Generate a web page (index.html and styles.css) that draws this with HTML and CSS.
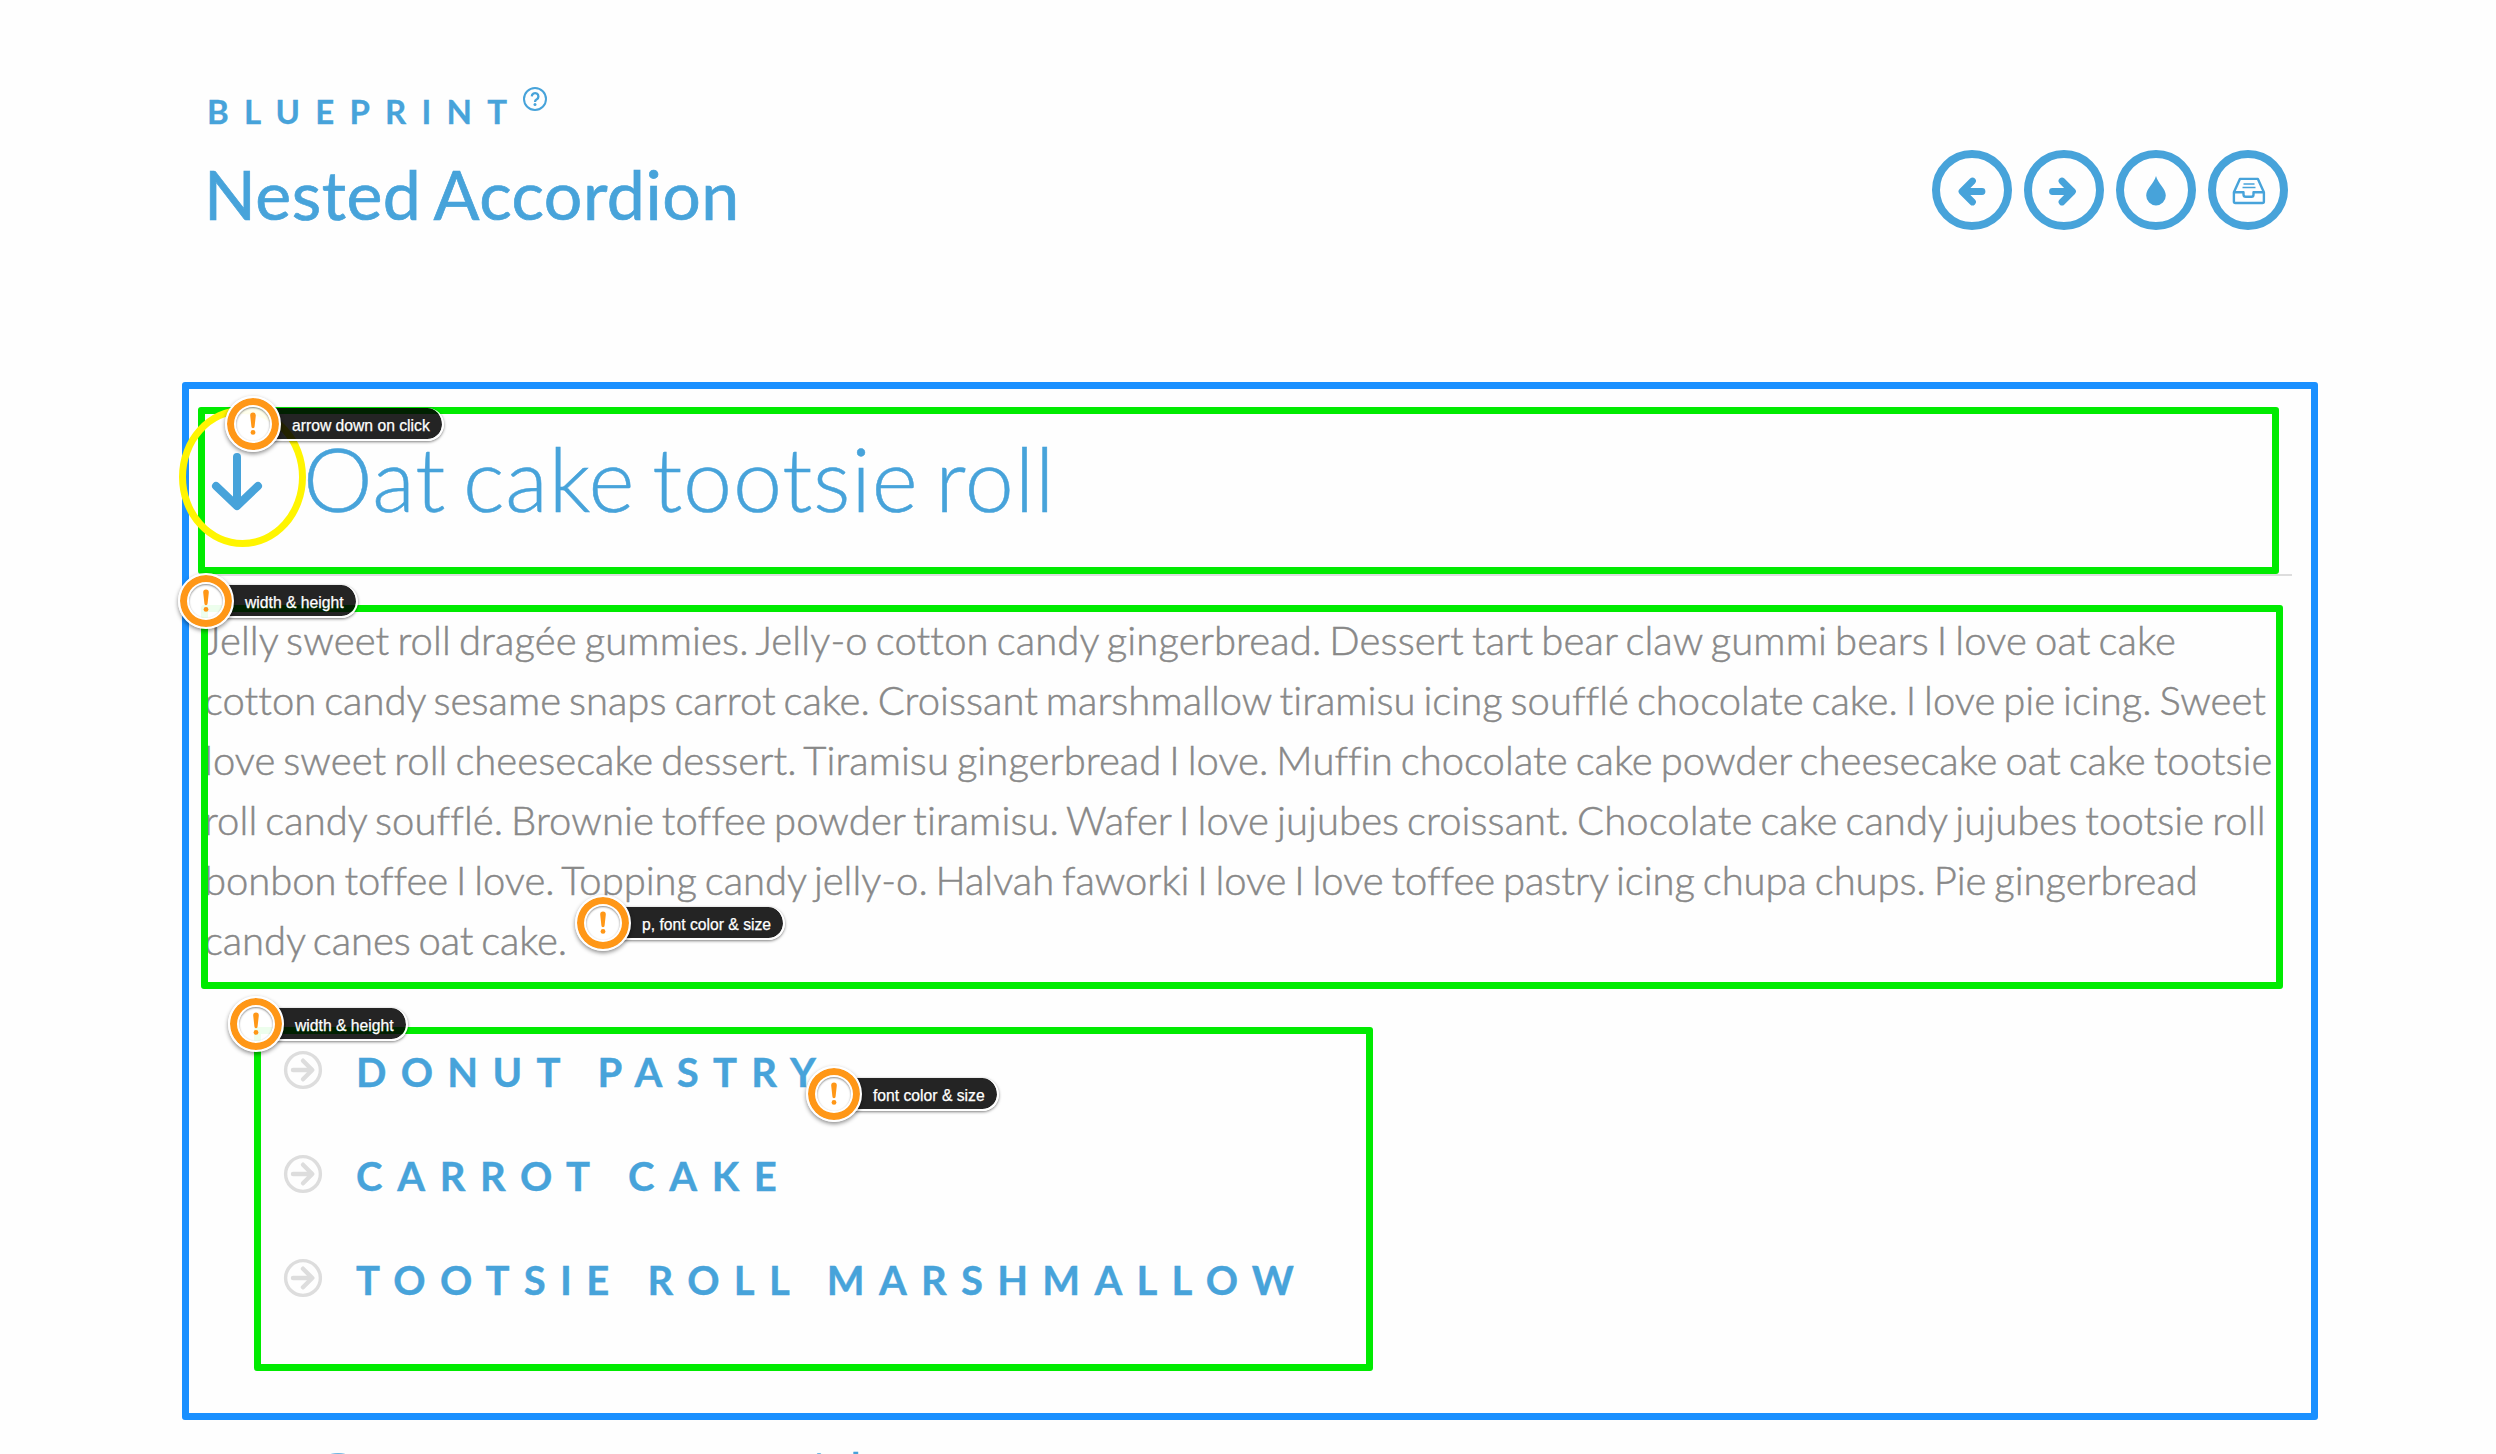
FILE: index.html
```html
<!DOCTYPE html>
<html lang="en">
<head>
<meta charset="utf-8">
<title>Nested Accordion</title>
<link rel="stylesheet" href="styles.css">
</head>
<body>
<svg class="defs" width="0" height="0" aria-hidden="true">
  <symbol id="circle-arrow" viewBox="0 0 40 40">
    <circle cx="20" cy="20" r="17.4" fill="none" stroke="currentColor" stroke-width="3.4"/>
    <path d="M10 20H29M20 10.7L29.3 20L20 29.3" fill="none" stroke="currentColor" stroke-width="4.4" stroke-linecap="round" stroke-linejoin="round"/>
  </symbol>
  <symbol id="alert" viewBox="0 0 12 24">
    <path d="M3.2 3.4a2.8 2.8 0 0 1 5.6 0L7.6 14.6a1.6 1.6 0 0 1-3.2 0z" fill="currentColor"/>
    <circle cx="6" cy="20.4" r="2.4" fill="currentColor"/>
  </symbol>
</svg>
<div class="page">
  <header class="header">
    <div class="titles">
      <span class="brand">Blueprint<svg class="help" viewBox="0 0 26 26"><circle cx="13" cy="13" r="11" fill="none" stroke="currentColor" stroke-width="2"/><path d="M9.800 10.400a3.300 3.300 0 1 1 5 2.900c-1.300.7-1.800 1.200-1.800 2.600" fill="none" stroke="currentColor" stroke-width="2.300"/><circle cx="13" cy="18.600" r="1.500" fill="currentColor"/></svg></span>
      <h1 class="title">Nested Accordion</h1>
    </div>
    <nav class="nav">
      <a class="nav-link"><svg viewBox="0 0 64 64"><path d="M32.500 23L22 33.500L32.500 44M23 33.500H42" class="thick"/></svg></a>
      <a class="nav-link"><svg viewBox="0 0 64 64"><path d="M30 23L40.500 33.500L30 44M39.500 33.500H20.500" class="thick"/></svg></a>
      <a class="nav-link"><svg viewBox="0 0 64 64"><path d="M32 18C30 25.500 22.200 30.500 22.200 37.600a9.800 9.800 0 0 0 19.600 0C41.800 30.500 34 25.500 32 18z" fill="currentColor"/></svg></a>
      <a class="nav-link"><svg viewBox="0 0 64 64"><path d="M17.900 34.300L23.900 20.900H41.900L47.900 34.300V43.500Q47.900 45 46.400 45H19.400Q17.900 45 17.900 43.500ZM17.900 34.300H27.500V36.500Q27.500 38.800 29.800 38.800H35.500Q37.500 38.800 37.500 36.500V34.300H47.900" class="thin"/><path d="M27.500 26H38.500M26.500 29.500H39.500" class="thin hair"/></svg></a>
    </nav>
  </header>
  <main class="accordion">
    <h2 class="heading open"><svg class="arrow" viewBox="0 0 52 60"><path d="M26 5V53M5 34L26 54L47 34"/></svg><span class="heading-text">Oat cake tootsie roll</span></h2>
    <p class="copy"><span class="line">Jelly sweet roll dragée gummies. Jelly-o cotton candy gingerbread. Dessert tart bear claw gummi bears I love oat cake</span> <span class="line line-2">cotton candy sesame snaps carrot cake. Croissant marshmallow tiramisu icing soufflé chocolate cake. I love pie icing. Sweet</span> <span class="line line-3">love sweet roll cheesecake dessert. Tiramisu gingerbread I love. Muffin chocolate cake powder cheesecake oat cake tootsie</span> <span class="line line-4">roll candy soufflé. Brownie toffee powder tiramisu. Wafer I love jujubes croissant. Chocolate cake candy jujubes tootsie roll</span> <span class="line line-5">bonbon toffee I love. Topping candy jelly-o. Halvah faworki I love I love toffee pastry icing chupa chups. Pie gingerbread</span> <span class="line line-6">candy canes oat cake.</span></p>
    <ul class="sublist">
      <li class="sub"><svg class="bullet"><use href="#circle-arrow"/></svg><span>Donut pastry</span></li>
      <li class="sub wide"><svg class="bullet"><use href="#circle-arrow"/></svg><span>Carrot cake</span></li>
      <li class="sub"><svg class="bullet"><use href="#circle-arrow"/></svg><span>Tootsie roll marshmallow</span></li>
    </ul>
    <h2 class="heading next"><span class="heading-text">Cream gummi bears</span></h2>
  </main>
</div>
<div class="frame frame-all"></div>
<div class="frame frame-heading"></div>
<div class="frame frame-copy"></div>
<div class="frame frame-list"></div>
<div class="ring"></div>
<div class="note note-arrow"><i class="pin"><svg><use href="#alert"/></svg></i><span class="label">arrow down on click</span></div>
<div class="note note-copy-size"><i class="pin"><svg><use href="#alert"/></svg></i><span class="label">width &amp; height</span></div>
<div class="note note-copy-font"><i class="pin"><svg><use href="#alert"/></svg></i><span class="label">p, font color &amp; size</span></div>
<div class="note note-list-size"><i class="pin"><svg><use href="#alert"/></svg></i><span class="label">width &amp; height</span></div>
<div class="note note-list-font"><i class="pin"><svg><use href="#alert"/></svg></i><span class="label">font color &amp; size</span></div>
</body>
</html>
```
FILE: styles.css
```css
* { box-sizing: border-box; }

body {
  margin: 0;
  height: 1454px;
  overflow: hidden;
  position: relative;
  background: #fefefe;
  color: #47a3da;
  font-family: Lato, "Liberation Sans", sans-serif;
  font-variant-ligatures: none;
}

.defs { position: absolute; }

.page { width: 2088px; height: 1454px; margin: 0 auto; }

/* Header */
.header {
  height: 386px;
  padding-top: 86px;
  display: flex;
  justify-content: space-between;
}

.brand {
  display: flex;
  height: 48px;
  font-size: 33px;
  line-height: 50px;
  font-weight: 700;
  letter-spacing: 15.200px;
  text-transform: uppercase;
  padding-left: 3px;
  -webkit-text-stroke: .3px currentColor;
}

.help { width: 26px; height: 26px; margin-left: -.5px; }

.title {
  margin: 20px 0 0;
  font-size: 68px;
  line-height: 80px;
  font-weight: 400;
  letter-spacing: .5px;
  word-spacing: -3.500px;
  -webkit-text-stroke: .7px currentColor;
}

.nav { display: flex; gap: 12px; padding: 64px 4px 0 0; }

.nav-link {
  width: 80px;
  height: 80px;
  border: 8px solid #47a3da;
  border-radius: 50%;
}

.nav-link svg { display: block; width: 64px; height: 64px; }
.thick { fill: none; stroke: currentColor; stroke-width: 6.800px; stroke-linecap: round; stroke-linejoin: round; }
.thin { fill: none; stroke: currentColor; stroke-width: 2.400px; stroke-linejoin: round; }
.hair { stroke-width: 1.600px; }

/* Accordion */
.heading {
  margin: 0;
  display: flex;
  font-size: 88px;
  line-height: 106px;
  font-weight: 300;
  letter-spacing: .8px;
  word-spacing: -7.700px;
  -webkit-text-stroke: .5px currentColor;
}

.open {
  height: 190px;
  padding-top: 39px;
  padding-left: 7px;
  border-bottom: 2px solid #ddd;
}

.arrow { width: 52px; height: 60px; margin: 27px 40px 0 0; }
.arrow path { fill: none; stroke: currentColor; stroke-width: 8px; stroke-linecap: round; stroke-linejoin: round; }

.copy {
  margin: 34px 0 0;
  height: 392px;
  font-size: 40px;
  line-height: 60px;
  font-weight: 300;
  letter-spacing: .13px;
  word-spacing: -3px;
  color: #888;
  -webkit-text-stroke: .5px currentColor;
}

.line { display: block; white-space: nowrap; }
.line-2 { letter-spacing: .03px; }
.line-3 { letter-spacing: .06px; }
.line-4 { letter-spacing: .08px; }
.line-5 { letter-spacing: -.02px; }
.line-6 { letter-spacing: -.06px; }

.sublist {
  margin: 0;
  padding: 18px 0 0 79px;
  height: 428px;
  list-style: none;
}

.sub {
  display: flex;
  align-items: center;
  gap: 33px;
  height: 104px;
  font-size: 40px;
  font-weight: 700;
  letter-spacing: 14.300px;
  text-transform: uppercase;
  -webkit-text-stroke: .4px currentColor;
}

.wide { letter-spacing: 14.700px; }

.bullet { width: 40px; height: 40px; margin-bottom: 4px; color: #ddd; }

.next { padding-left: 99px; height: 24px; overflow: hidden; white-space: nowrap; }

/* Annotations laid over the page */
.frame { position: absolute; border: 7px solid #00eb00; border-radius: 3px; }
.frame-all { left: 182px; top: 382px; width: 2136px; height: 1038px; border-color: #1a90ff; }
.frame-heading { left: 198px; top: 407px; width: 2081px; height: 167px; }
.frame-copy { left: 201px; top: 605px; width: 2082px; height: 384px; }
.frame-list { left: 254px; top: 1027px; width: 1118.500px; height: 344px; }

.ring {
  position: absolute;
  left: 179px;
  top: 407px;
  width: 127px;
  height: 140px;
  border: 7px solid #fff500;
  border-radius: 50%;
}

.note { position: absolute; display: flex; align-items: center; height: 56px; }

.pin {
  position: relative;
  z-index: 1;
  flex: none;
  width: 56px;
  height: 56px;
  border: 2px solid #fff;
  border-radius: 50%;
  background: rgba(255, 255, 255, .93);
  box-shadow: 0 2px 4px rgba(0, 0, 0, .45), inset 0 0 0 7px #ff9717, inset 0 0 0 9px #fff, inset 0 1px 2px 9px rgba(0, 0, 0, .45);
}

.pin svg { position: absolute; left: 20px; top: 14px; width: 12px; height: 24px; color: #ff9717; }

.label {
  height: 33px;
  margin-left: -10px;
  padding: 2px 12px 0 21px;
  border: solid #fff;
  border-width: 0 2px 2px 0;
  border-radius: 0 17px 17px 0;
  background: rgba(0, 0, 0, .86);
  background-clip: padding-box;
  box-shadow: 0 1px 3px rgba(0, 0, 0, .5);
  color: #fff;
  font: 15.700px/31px "Liberation Sans", Arial, sans-serif;
  -webkit-text-stroke: .25px currentColor;
  white-space: nowrap;
}

.note-arrow { left: 225px; top: 396px; }
.note-copy-size { left: 178px; top: 573px; }
.note-copy-font { left: 575px; top: 895px; }
.note-list-size { left: 228px; top: 996px; }
.note-list-font { left: 806px; top: 1066px; }
```
